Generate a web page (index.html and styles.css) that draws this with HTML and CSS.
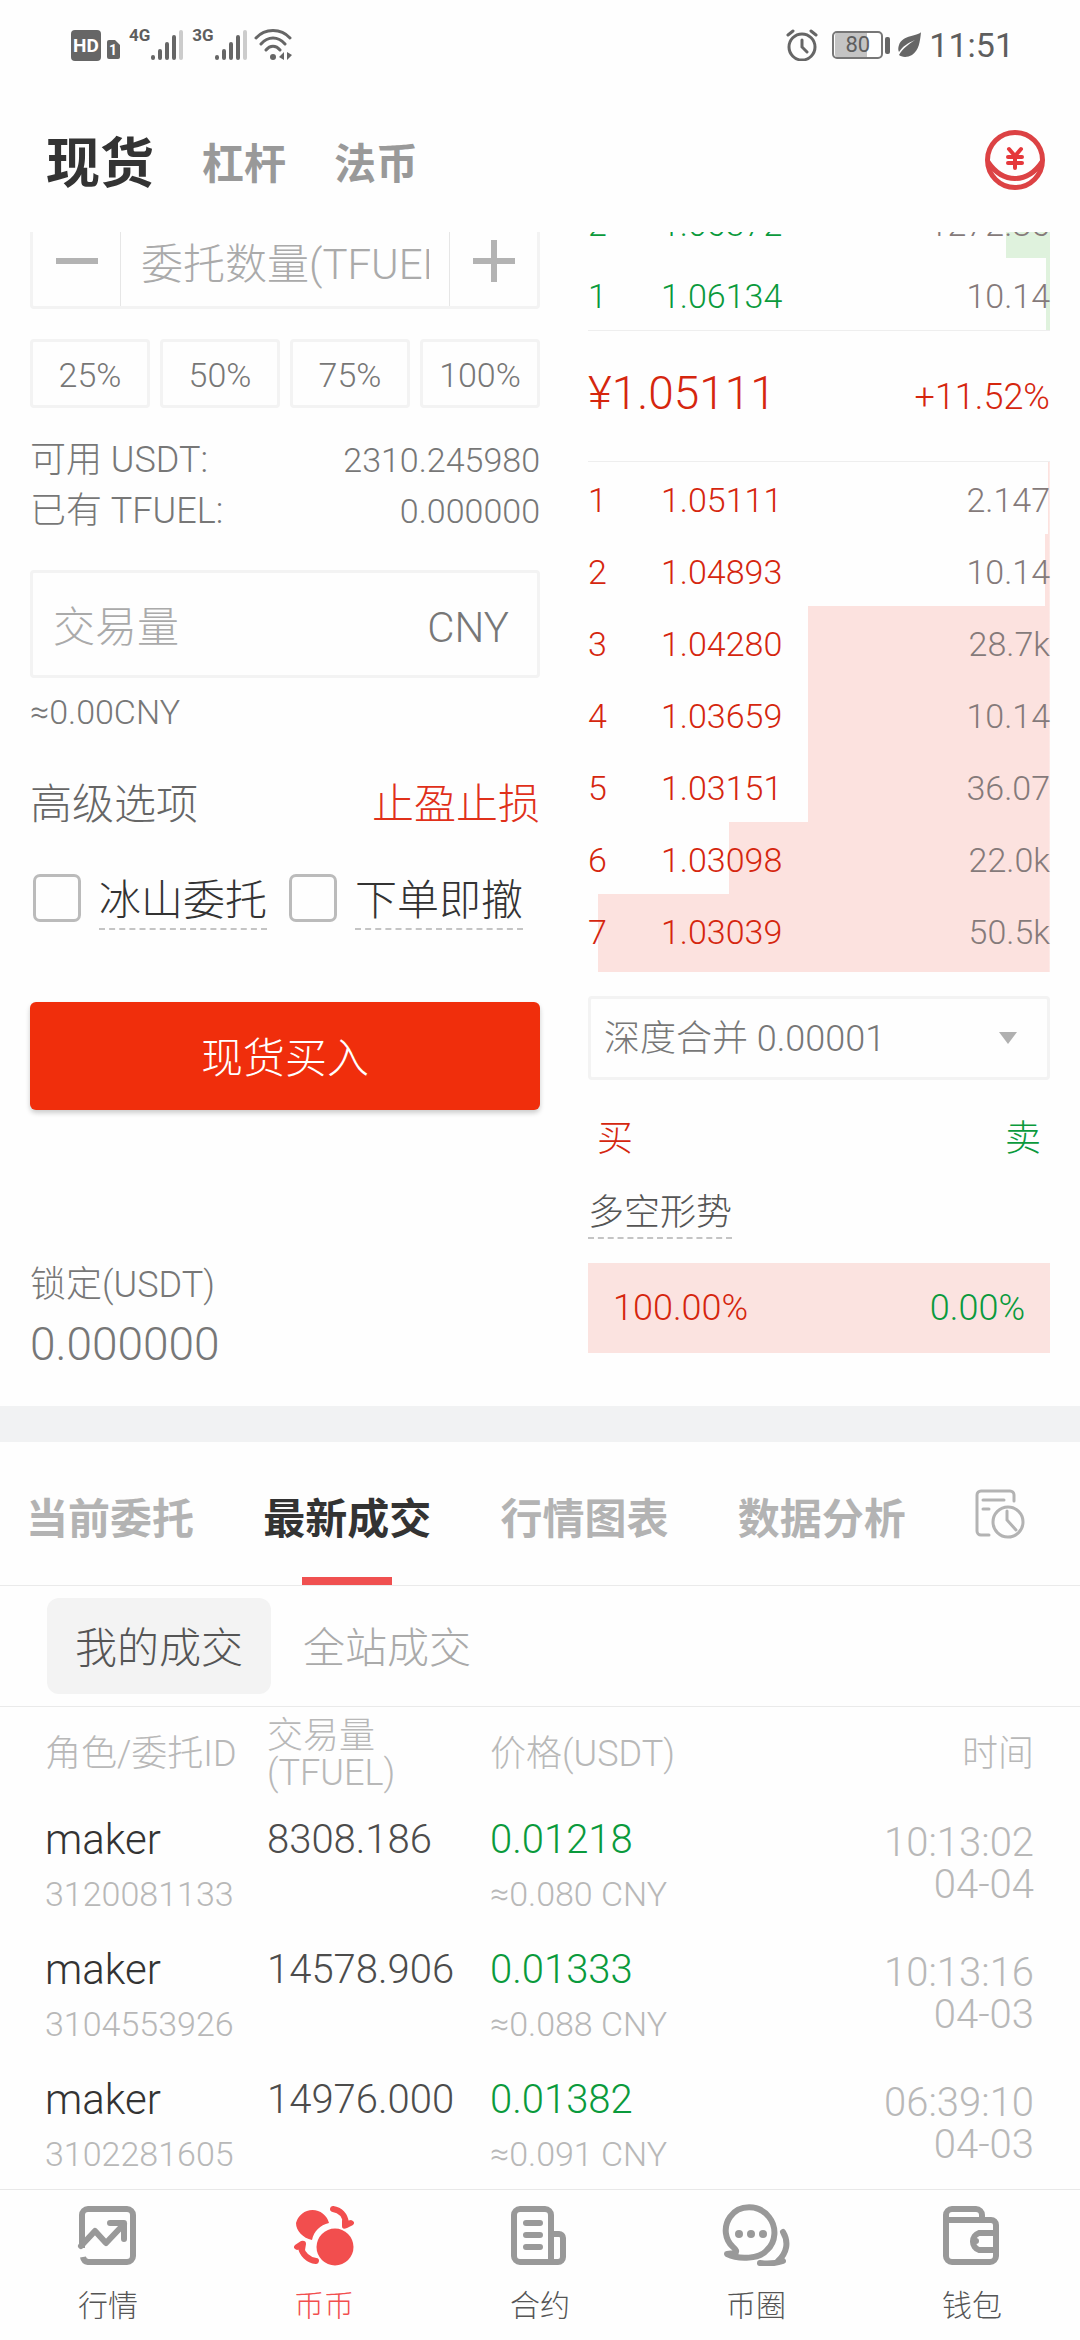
FILE: index.html
```html
<!DOCTYPE html>
<html lang="zh-CN">
<head>
<meta charset="utf-8">
<meta name="viewport" content="width=device-width, initial-scale=1">
<title>现货交易</title>
<link rel="stylesheet" href="styles.css">
</head>
<body>
<div class="status">
  <div class="status-group">
    <svg viewBox="0 0 50 32" width="50" height="32"><rect x="0" y="1" width="30" height="31" rx="4" fill="#666"/><text x="15" y="23" class="hd-text" text-anchor="middle">HD</text><path d="M38 11h6l5 5v12a2 2 0 0 1-2 2h-9a2 2 0 0 1-2-2V13a2 2 0 0 1 2-2z" fill="#666"/><text x="42" y="26" class="sim-text" text-anchor="middle">1</text></svg>
    <span class="net">4G</span>
    <svg viewBox="0 0 34 32" width="34" height="32" stroke-width="4" stroke-linecap="round" stroke="#666"><path d="M3 28v1M10 22v7M17 15v14M24 8v21"/><path d="M31 3v26" stroke="#ccc"/></svg>
    <span class="net">3G</span>
    <svg viewBox="0 0 34 32" width="34" height="32" stroke-width="4" stroke-linecap="round" stroke="#666"><path d="M3 28v1M10 22v7M17 15v14M24 8v21"/><path d="M31 3v26" stroke="#ccc"/></svg>
    <svg class="wifi" viewBox="0 0 38 32" width="38" height="32" fill="none" stroke="#666" stroke-width="3" stroke-linecap="round"><path d="M2 9C11-1 27-1 36 9M7 15c7-8 17-8 24 0M12 21c4-5 10-5 14 0"/><circle cx="19" cy="28" r="3" fill="#666" stroke="none"/><path d="M25 28l5-5v8zM38 26l-5 5v-8z" fill="#666" stroke="none"/></svg>
  </div>
  <div class="status-group">
    <svg viewBox="0 0 32 32" width="32" height="32" fill="none" stroke="#666" stroke-width="3" stroke-linecap="round"><circle cx="16" cy="18" r="13"/><path d="M16 11v7l5 5M2 6l5-4M30 6l-5-4"/></svg>
    <div class="battery"><span class="battery-cell">80</span><span class="battery-tip"></span></div>
    <svg viewBox="0 0 24 26" width="24" height="26"><path d="M24 0C22 4 5 3 2 13c-1 3-1 5 0 7 4-6 9-9 16-12C12 12 6 16 2 23c2 2 8 3 13 0 7-5 8-13 9-23z" fill="#666"/></svg>
    <span class="clock">11:51</span>
  </div>
</div>

<header class="header">
  <nav class="markets">
    <a href="#" class="market on">现货</a>
    <a href="#" class="market">杠杆</a>
    <a href="#" class="market">法币</a>
  </nav>
  <button class="coin" aria-label="法币购买">
    <svg viewBox="0 0 60 62" width="60" height="62" fill="none" stroke="#dc4244" stroke-width="5"><circle cx="30" cy="31" r="27.500"/><path d="M3 33c15 22 39 22 54 0"/><path d="M24 20l6 7 6-7M30 27v12M23 28h14M23 34h14" stroke="#e5383b" stroke-width="4" stroke-linecap="round"/></svg>
  </button>
</header>

<main>
<section class="trade">
  <form class="order">
    <div class="stepper">
      <button type="button" class="step" aria-label="减少"><svg viewBox="0 0 42 42" width="42" height="42"><path d="M0 21h42" stroke="#b3b3b3" stroke-width="6"/></svg></button>
      <input class="amount" type="text" aria-label="委托数量" placeholder="委托数量(TFUEL)">
      <button type="button" class="step" aria-label="增加"><svg viewBox="0 0 42 42" width="42" height="42"><path d="M0 21h42M21 0v42" stroke="#b3b3b3" stroke-width="6"/></svg></button>
    </div>
    <div class="ratios">
      <button type="button" class="ratio">25%</button>
      <button type="button" class="ratio">50%</button>
      <button type="button" class="ratio">75%</button>
      <button type="button" class="ratio">100%</button>
    </div>
    <div class="balances">
      <div class="pair"><span class="label">可用 USDT:</span><span>2310.245980</span></div>
      <div class="pair"><span class="label">已有 TFUEL:</span><span>0.000000</span></div>
    </div>
    <label class="volume"><input class="volume-input" type="text" placeholder="交易量"><span>CNY</span></label>
    <p class="approx">≈0.00CNY</p>
    <div class="pair advanced"><span>高级选项</span><a href="#" class="stop">止盈止损</a></div>
    <div class="checks">
      <label class="check"><input type="checkbox"><span class="dashed">冰山委托</span></label>
      <label class="check"><input type="checkbox"><span class="dashed">下单即撤</span></label>
    </div>
    <button type="button" class="buy">现货买入</button>
    <div class="locked"><span class="label">锁定(USDT)</span><span class="locked-value">0.000000</span></div>
  </form>

  <div class="book">
    <table class="depth asks">
      <tr style="--depth:45px"><td>2</td><td>1.06372</td><td>1272.86</td></tr>
      <tr style="--depth:4px"><td>1</td><td>1.06134</td><td>10.14</td></tr>
    </table>
    <div class="last"><span class="last-price">¥1.05111</span><span>+11.52%</span></div>
    <table class="depth bids">
      <tr style="--depth:2px"><td>1</td><td>1.05111</td><td>2.147</td></tr>
      <tr style="--depth:5px"><td>2</td><td>1.04893</td><td>10.14</td></tr>
      <tr style="--depth:242px"><td>3</td><td>1.04280</td><td>28.7k</td></tr>
      <tr style="--depth:242px"><td>4</td><td>1.03659</td><td>10.14</td></tr>
      <tr style="--depth:242px"><td>5</td><td>1.03151</td><td>36.07</td></tr>
      <tr style="--depth:321px"><td>6</td><td>1.03098</td><td>22.0k</td></tr>
      <tr style="--depth:452px"><td>7</td><td>1.03039</td><td>50.5k</td></tr>
    </table>
    <div class="merge">
      <select class="merge-select" aria-label="深度合并"><option>深度合并 0.00001</option></select>
      <svg class="caret" viewBox="0 0 18 12" width="18" height="12"><path d="M0 0h18L9 12z" fill="#b0b0b0"/></svg>
    </div>
    <div class="sides"><span class="red">买</span><span class="green">卖</span></div>
    <span class="trend dashed">多空形势</span>
    <div class="share"><span class="red">100.00%</span><span class="green">0.00%</span></div>
  </div>
</section>

<section class="records">
  <nav class="tabs">
    <a href="#" class="tab">当前委托</a>
    <a href="#" class="tab on">最新成交</a>
    <a href="#" class="tab">行情图表</a>
    <a href="#" class="tab">数据分析</a>
    <button class="history" aria-label="历史记录"><svg viewBox="0 0 50 50" width="50" height="50" fill="none" stroke="#b3b3b3" stroke-width="3" stroke-linecap="round"><path d="M39 12V6a4 4 0 0 0-4-4H6a4 4 0 0 0-4 4v36a4 4 0 0 0 4 4h8M8 11h21M8 20h6"/><circle cx="33" cy="33" r="15"/><path d="M32 22v9l9 10"/></svg></button>
  </nav>
  <div class="scopes">
    <button class="scope on">我的成交</button>
    <button class="scope">全站成交</button>
  </div>
  <table class="fills">
    <thead><tr><th>角色/委托ID</th><th>交易量<br>(TFUEL)</th><th>价格(USDT)</th><th>时间</th></tr></thead>
    <tbody>
      <tr><td><b class="role">maker</b><small>3120081133</small></td><td><b>8308.186</b></td><td><b class="green">0.01218</b><small>≈0.080 CNY</small></td><td class="time">10:13:02<br>04-04</td></tr>
      <tr><td><b class="role">maker</b><small>3104553926</small></td><td><b>14578.906</b></td><td><b class="green">0.01333</b><small>≈0.088 CNY</small></td><td class="time">10:13:16<br>04-03</td></tr>
      <tr><td><b class="role">maker</b><small>3102281605</small></td><td><b>14976.000</b></td><td><b class="green">0.01382</b><small>≈0.091 CNY</small></td><td class="time">06:39:10<br>04-03</td></tr>
    </tbody>
  </table>
</section>
</main>

<nav class="tabbar">
  <a href="#" class="item"><svg viewBox="0 0 68 62" width="68" height="62" fill="none" stroke="#999" stroke-width="6"><path d="M8 44V11a6 6 0 0 1 6-6h39a6 6 0 0 1 6 6v41a6 6 0 0 1-6 6H14a6 6 0 0 1-5-5"/><path d="M7 42l14-15 11 12 18-19M36 19h14v16" stroke-linejoin="round" stroke-linecap="round"/></svg><span>行情</span></a>
  <a href="#" class="item on"><svg viewBox="0 0 68 62" width="68" height="62" fill="#f24e4e"><path d="M22 36C13 34 6 27 6 19A17 17 0 0 1 39 19c-9 2-15 8-17 17z"/><circle cx="45" cy="43" r="18.500"/><path d="M43 5c7 1 12 6 13 14M11 43c1 7 7 13 15 14" fill="none" stroke="#f24e4e" stroke-width="6" stroke-linecap="round"/><path d="M52 16l4 1 5-1q5 2 2 5l-6 3q-5 2-5-2zM15 46l-4-1-4 1q-5-2-2-5l6-4q5-1 5 3z"/></svg><span>币币</span></a>
  <a href="#" class="item"><svg viewBox="0 0 68 62" width="68" height="62" fill="none" stroke="#999" stroke-width="6" stroke-linecap="round"><path d="M45 58H14a6 6 0 0 1-6-6V11a6 6 0 0 1 6-6h25a6 6 0 0 1 6 6v47M45 30h8a4 4 0 0 1 4 4v19a5 5 0 0 1-5 5h-7M20 19h14M20 31h14M20 43h14"/></svg><span>合约</span></a>
  <a href="#" class="item"><svg viewBox="0 0 68 62" width="68" height="62" fill="none" stroke="#999" stroke-width="6" stroke-linecap="round"><path d="M5 50c12 6 33 5 40-4 9-8 10-23 2-33C37 0 17 0 8 13c-7 10-5 23 3 30q5 4 2 6z" stroke-linejoin="round"/><path d="M61 28c6 10 4 21-5 29M38 59c9 1 17 0 23-2"/><g fill="#999" stroke="none"><circle cx="17" cy="30" r="4"/><circle cx="29" cy="30" r="4"/><circle cx="41" cy="30" r="4"/></g></svg><span>币圈</span></a>
  <a href="#" class="item"><svg viewBox="0 0 68 62" width="68" height="62" fill="none" stroke="#999" stroke-width="6"><path d="M8 17V11a6 6 0 0 1 6-6h24a6 6 0 0 1 6 6v6M8 15v37a6 6 0 0 0 6 6h38a6 6 0 0 0 6-6V21a5 5 0 0 0-5-5H8M58 29H41a9 9 0 0 0 0 17h17"/><circle cx="38" cy="37" r="3" fill="#999" stroke="none"/></svg><span>钱包</span></a>
</nav>
</body>
</html>
```
FILE: styles.css
```css
* { box-sizing: border-box; }

body {
  margin: 0;
  min-height: 100vh;
  display: flex;
  flex-direction: column;
  background: #fefefe;
  color: #777;
  font-family: Roboto, "Noto Sans CJK SC", sans-serif;
  font-size: 34px;
  font-weight: 300;
  line-height: 51px;
}

a { color: inherit; text-decoration: none; }
p { margin: 0; }
svg { display: block; flex: none; }

button, input, select {
  margin: 0;
  padding: 0;
  border: 0;
  background: none;
  color: inherit;
  font: inherit;
}

input::placeholder { color: #aaa; opacity: 1; }

.red { color: #d5260e; }
.green { color: #0a9a3c; }
.label { font-size: 36px; }

/* status bar */
.status {
  display: flex;
  justify-content: space-between;
  height: 90px;
  padding: 0 66px 0 71px;
  color: #5e5e5e;
}

.status-group { display: flex; align-items: center; }
.net { align-self: flex-start; margin-left: 8px; padding-top: 25px; font-size: 17px; font-weight: 700; line-height: 20px; }
.wifi { margin-left: 6px; }
.hd-text { fill: #fff; font-size: 19px; font-weight: 700; }
.sim-text { fill: #fff; font-size: 14px; font-weight: 700; }

.battery { display: flex; align-items: center; gap: 2px; margin: 0 7px 0 14px; }
.battery-cell {
  width: 51px;
  height: 28px;
  padding: 0 1px;
  border: 2px solid #777;
  border-radius: 5px;
  background: linear-gradient(to right, #c4c4c4 72%, #fff 72%) content-box;
  font-size: 22px;
  font-weight: 400;
  line-height: 24px;
  text-align: center;
}
.battery-tip { width: 5px; height: 17px; border-radius: 2px; background: #666; }
.clock { margin-left: 8px; font-weight: 400; }

/* header */
.header {
  display: flex;
  align-items: center;
  justify-content: space-between;
  height: 142px;
  padding: 0 35px 0 46px;
}

.markets { display: flex; align-items: center; gap: 48px; padding-top: 6px; }
.market { color: #999; font-size: 42px; font-weight: 700; }
.market.on { color: #333; font-size: 54px; }
.coin { padding-bottom: 2px; }

/* order form and order book */
.trade {
  display: grid;
  grid-template-columns: 510fr 462fr;
  gap: 48px;
  padding: 0 30px 36px;
  overflow: hidden;
}

.order, .book { display: flex; flex-direction: column; min-width: 0; }

.stepper {
  display: grid;
  grid-template-columns: 88px 1fr 88px;
  height: 90px;
  margin-top: -13px;
  border: 3px solid #f3f3f3;
  border-radius: 4px;
}

.step { display: flex; align-items: center; justify-content: center; padding-bottom: 6px; }
.amount { min-width: 0; margin: 0 20px; font-size: 42px; }
.step:first-child { border-right: 1px solid #e6e6e6; }
.step:last-child { border-left: 1px solid #e6e6e6; }

.ratios { display: grid; grid-template-columns: repeat(4, 1fr); gap: 10px; margin-top: 30px; }
.ratio { height: 69px; padding-top: 4px; border: 3px solid #f3f3f3; border-radius: 4px; }

.balances { margin-top: 27px; }
.pair { display: flex; justify-content: space-between; }

.volume {
  display: flex;
  align-items: center;
  height: 108px;
  margin-top: 33px;
  padding: 6px 28px 0 20px;
  border: 3px solid #f3f3f3;
  border-radius: 4px;
  font-size: 42px;
}
.volume-input { flex: 1; min-width: 0; }

.approx { margin-top: 9px; }
.advanced { margin-top: 41px; color: #666; font-size: 42px; }
.stop { color: #e0301a; }

.checks { display: flex; gap: 22px; margin-top: 44px; padding-left: 3px; color: #333; font-size: 42px; }
.check { display: flex; gap: 18px; }
.check input {
  appearance: none;
  width: 48px;
  height: 48px;
  border: 3px solid #bbb;
  border-radius: 7px;
}
.dashed { border-bottom: 2px dashed #c4c4c4; }
.check .dashed { height: 56px; line-height: 54px; }

.buy {
  height: 108px;
  margin-top: 72px;
  padding-top: 4px;
  border-radius: 6px;
  background: #f02e0c;
  box-shadow: 0 3px 5px rgba(0, 0, 0, .2);
  color: #fff;
  font-size: 42px;
}

.locked { display: flex; flex-direction: column; gap: 8px; margin-top: 150px; }
.locked-value { font-size: 46px; }

.depth { width: 100%; border-collapse: collapse; color: #d5260e; }
.depth tr { background: linear-gradient(to left, var(--shade) var(--depth), transparent var(--depth)); }
.depth td { height: 72px; padding: 4px 0 0; }
.depth td:nth-child(1) { width: 73px; }
.depth td:nth-child(3) { color: #857a7a; text-align: right; }
.asks { --shade: #dff2dd; margin-top: -46px; color: #0a9a3c; }
.bids { --shade: #fce2df; }
.bids tr:last-child td { padding-bottom: 6px; height: 78px; }

.last {
  display: flex;
  align-items: baseline;
  justify-content: space-between;
  height: 132px;
  padding-top: 37px;
  border-top: 1px solid #eee;
  border-bottom: 1px solid #eee;
  color: #d5260e;
  font-size: 36px;
}
.last-price { font-size: 46px; }

.merge { display: grid; align-items: center; margin-top: 24px; }
.merge > * { grid-area: 1 / 1; }
.merge-select {
  appearance: none;
  width: 100%;
  height: 84px;
  padding: 3px 13px 0;
  border: 3px solid #f3f3f3;
  border-radius: 4px;
  font-size: 36px;
}
.caret { justify-self: end; margin-right: 33px; pointer-events: none; }

.sides { display: flex; justify-content: space-between; margin-top: 34px; padding: 0 9px; font-size: 36px; }
.trend { align-self: flex-start; margin-top: 24px; color: #555; font-size: 36px; line-height: 48px; }
.share {
  display: flex;
  align-items: center;
  justify-content: space-between;
  height: 90px;
  margin-top: 24px;
  padding: 0 25px;
  background: #fbe3e0;
  font-size: 36px;
}

/* records */
.records { border-top: 36px solid #f1f2f3; }

.tabs {
  display: flex;
  justify-content: space-between;
  height: 144px;
  padding: 0 55px 0 26px;
  border-bottom: 1px solid #eaeaea;
}
.tab {
  display: flex;
  flex-direction: column;
  align-items: center;
  justify-content: space-between;
  padding-top: 52px;
  color: #b3b3b3;
  font-size: 42px;
  font-weight: 700;
}
.tab.on { color: #333; }
.tab.on::after { content: ""; width: 90px; height: 8px; background: #f05050; }

.scopes { display: flex; gap: 4px; padding: 12px 47px; border-bottom: 1px solid #eaeaea; }
.scope { height: 96px; padding: 5px 28px 0; border-radius: 12px; color: #aaa; font-size: 42px; }
.scope.on { background: #f3f3f3; color: #555; }

.fills { width: 100%; border-collapse: collapse; table-layout: fixed; color: #b8b8b8; }
.fills th { height: 95px; padding: 0; font-size: 36px; font-weight: 300; line-height: 37px; text-align: left; }
.fills th:nth-child(1) { width: 267px; }
.fills th:nth-child(2) { width: 223px; }
.fills td { padding: 10px 0; vertical-align: top; }
.fills tr > :first-child { padding-left: 45px; }
.fills tr > :last-child { padding-right: 46px; text-align: right; }
.fills b, .fills small { display: block; line-height: 55px; font-size: 34px; font-weight: 300; }
.fills b { color: #4c4c4c; font-size: 40px; }
.fills .role { color: #333; font-size: 42px; }
.fills .green { color: #0a9a3c; }
.fills .time { padding-top: 20px; font-size: 40px; line-height: 42px; }
.fills tbody tr:last-child td { padding-bottom: 0; }

/* bottom navigation */
.tabbar {
  display: grid;
  grid-template-columns: repeat(5, 1fr);
  margin-top: auto;
  height: 151px;
  border-top: 1px solid #e8e8e8;
}
.item {
  display: flex;
  flex-direction: column;
  align-items: center;
  gap: 18px;
  padding-top: 14px;
  color: #555;
  font-size: 30px;
  line-height: 44px;
}
.item.on { color: #f24e4e; }
```
